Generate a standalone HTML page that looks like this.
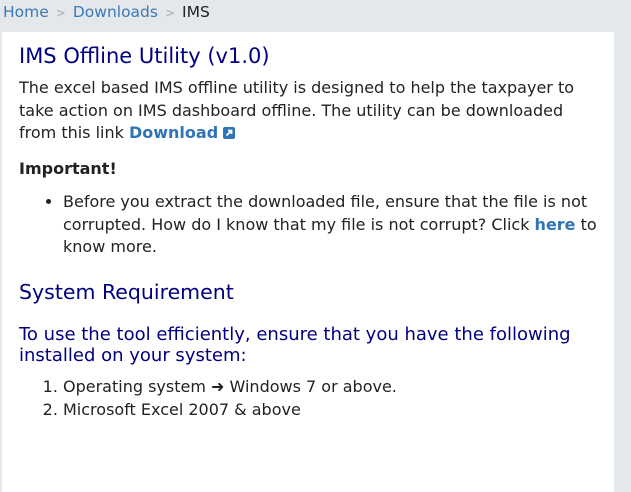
<!DOCTYPE html>
<html><head><style>
body{margin:0;background:#e5e8eb;font-family:"DejaVu Sans","Liberation Sans",sans-serif;width:631px;height:485px;overflow:hidden;}
.bc{height:32px;line-height:24px;font-size:15.5px;padding-left:3px;color:#222;}
.bc a{color:#3a78b8;text-decoration:none}
.bc .s{color:#aaa;margin:0 7px;font-size:12px}
.panel{position:absolute;left:2px;top:32px;width:612px;height:460px;background:#fff;}
.in{padding:0 15px 0 17px;font-size:16px;line-height:22.5px;color:#222;}
h1{font-weight:normal;color:#000080;font-size:21px;margin:0;padding-top:10px;line-height:28px}
p{margin:7px 0 0}
a.l{color:#2f75b5;font-weight:bold;text-decoration:none}
.ic{display:inline-block;width:12px;height:12px;background:#2f75b5;border-radius:2px;vertical-align:-1px;position:relative}
h2{font-weight:normal;color:#000080;font-size:20.5px;margin:19px 0 0;line-height:28px}
h3{font-weight:normal;color:#000080;font-size:18px;margin:18px 0 0;line-height:21px}
ul,ol{margin:11px 0 0;padding-left:44px}
ol{margin-top:9px}
ol li{line-height:23px}
</style></head><body>
<div class="bc"><a>Home</a><span class="s">&gt;</span><a>Downloads</a><span class="s">&gt;</span>IMS</div>
<div class="panel"><div class="in">
<h1>IMS Offline Utility (v1.0)</h1>
<p>The excel based IMS offline utility is designed to help the taxpayer to take action on IMS dashboard offline. The utility can be downloaded from this link <a class="l">Download</a> <span class="ic"><svg width="12" height="12" viewBox="0 0 12 12" style="position:absolute;left:0;top:0"><path d="M3.5 8.5L8 4M5 3.5H8.5V7" stroke="#fff" stroke-width="1.8" fill="none"/></svg></span></p>
<p style="margin-top:13px"><b>Important!</b></p>
<ul><li>Before you extract the downloaded file, ensure that the file is not corrupted. How do I know that my file is not corrupt? Click <a class="l">here</a> to know more.</li></ul>
<h2>System Requirement</h2>
<h3>To use the tool efficiently, ensure that you have the following installed on your system:</h3>
<ol><li>Operating system <b>&#10140;</b> Windows 7 or above.</li><li>Microsoft Excel 2007 &amp; above</li></ol>
</div></div>
</body></html>
